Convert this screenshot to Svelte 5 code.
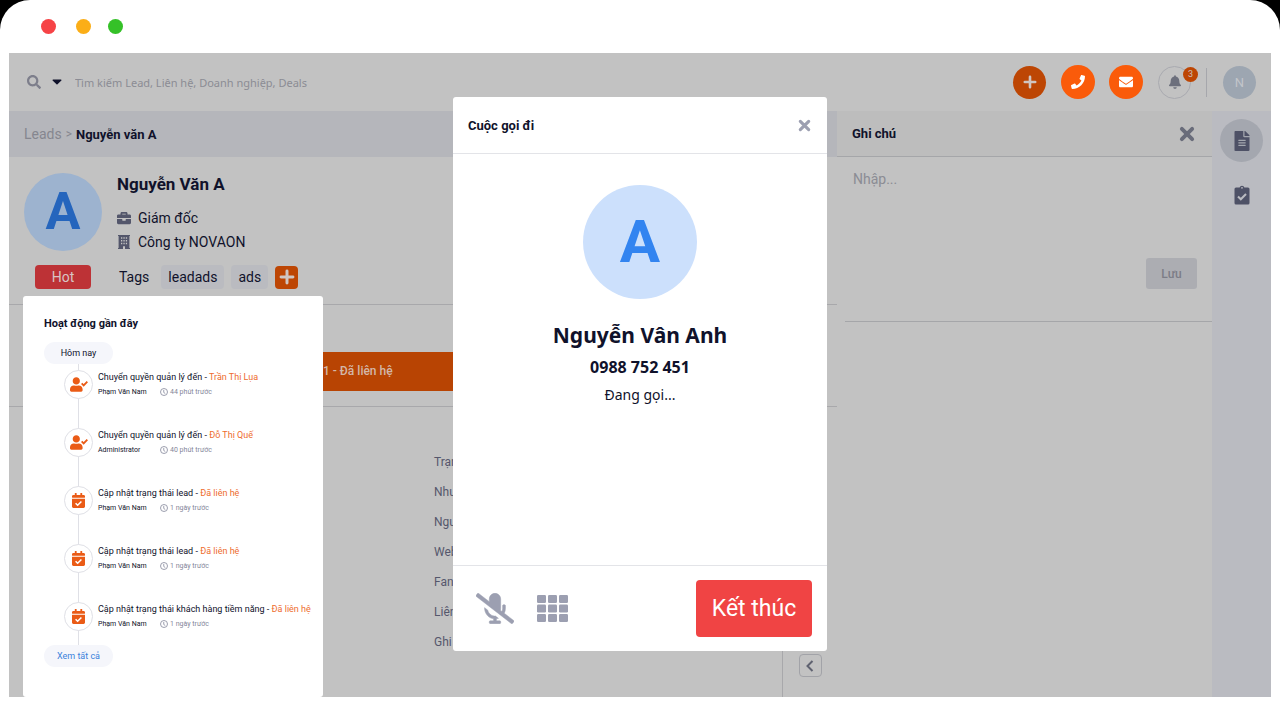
<script lang="ts">
  type Activity = {
    icon: 'user' | 'calendar';
    text: string;
    target: string;
    author: string;
    time: string;
  };

  const activities: Activity[] = [
    { icon: 'user', text: 'Chuyển quyền quản lý đến', target: 'Trần Thị Lụa', author: 'Phạm Văn Nam', time: '44 phút trước' },
    { icon: 'user', text: 'Chuyển quyền quản lý đến', target: 'Đỗ Thị Quế', author: 'Administrator', time: '40 phút trước' },
    { icon: 'calendar', text: 'Cập nhật trạng thái lead', target: 'Đã liên hệ', author: 'Phạm Văn Nam', time: '1 ngày trước' },
    { icon: 'calendar', text: 'Cập nhật trạng thái lead', target: 'Đã liên hệ', author: 'Phạm Văn Nam', time: '1 ngày trước' },
    { icon: 'calendar', text: 'Cập nhật trạng thái khách hàng tiềm năng', target: 'Đã liên hệ', author: 'Phạm Văn Nam', time: '1 ngày trước' },
  ];

  const fields = ['Trạng thái', 'Nhu cầu', 'Nguồn', 'Website', 'Fanpage', 'Liên hệ', 'Ghi chú'];
  const tags = ['leadads', 'ads'];

  let search = $state('');
  let note = $state('');
  let calling = $state(true);
</script>

{#snippet cross(size: number)}
  <svg width={size} height={size} viewBox="0 0 14 14" aria-hidden="true">
    <path d="M2.5 2.5l9 9M11.5 2.5l-9 9" fill="none" stroke="currentColor" stroke-width="3.4" stroke-linecap="round" />
  </svg>
{/snippet}

{#snippet plus(size: number)}
  <svg width={size} height={size} viewBox="0 0 14 14" aria-hidden="true">
    <path d="M7 1.8v10.4M1.8 7h10.4" fill="none" stroke="currentColor" stroke-width="2.6" stroke-linecap="round" />
  </svg>
{/snippet}

<div class="window">
  <div class="title-bar">
    <span class="dot red"></span>
    <span class="dot yellow"></span>
    <span class="dot green"></span>
  </div>

  <div class="app">
    <header class="topbar">
      <svg class="search-icon" width="14" height="14" viewBox="0 0 512 512" aria-hidden="true">
        <path fill="currentColor" d="M505 442.7L405.3 343c-4.5-4.5-10.6-7-17-7H372c27.6-35.3 44-79.7 44-128C416 93.1 322.9 0 208 0S0 93.1 0 208s93.1 208 208 208c48.3 0 92.7-16.4 128-44v16.3c0 6.4 2.5 12.5 7 17l99.7 99.7c9.4 9.4 24.6 9.4 33.9 0l28.3-28.3c9.4-9.4 9.4-24.6.1-34zM208 336c-70.7 0-128-57.2-128-128 0-70.7 57.2-128 128-128 70.7 0 128 57.2 128 128 0 70.7-57.2 128-128 128z" />
      </svg>
      <button class="caret" aria-label="Bộ lọc">
        <svg width="10" height="6" viewBox="0 0 10 6" aria-hidden="true">
          <path fill="currentColor" d="M1 .5h8a.6.6 0 0 1 .4 1L5.5 5.3a.7.7 0 0 1-1 0L.6 1.5a.6.6 0 0 1 .4-1z" />
        </svg>
      </button>
      <input
        class="search"
        type="text"
        aria-label="Tìm kiếm"
        placeholder="Tìm kiếm Lead, Liên hệ, Doanh nghiệp, Deals"
        bind:value={search}
      />
      <div class="actions">
        <button class="round dim" aria-label="Thêm">{@render plus(14)}</button>
        <button class="round" aria-label="Gọi điện" onclick={() => (calling = true)}>
          <svg width="14" height="14" viewBox="0 0 512 512" aria-hidden="true">
            <path fill="currentColor" d="M493.4 24.6l-104-24c-11.3-2.6-22.9 3.3-27.5 13.9l-48 112c-4.2 9.8-1.4 21.3 6.9 28l60.6 49.6c-36 76.7-98.9 140.5-177.2 177.2l-49.6-60.6c-6.8-8.3-18.2-11.1-28-6.9l-112 48C3.9 366.5-2 378.1.6 389.4l24 104C27.1 504.2 36.7 512 48 512c256.1 0 464-207.5 464-464 0-11.2-7.7-20.9-18.6-23.4z" />
          </svg>
        </button>
        <button class="round" aria-label="Gửi email">
          <svg width="14" height="14" viewBox="0 0 512 512" aria-hidden="true">
            <path fill="currentColor" d="M502.3 190.8c3.9-3.1 9.7-.2 9.7 4.7V400c0 26.5-21.5 48-48 48H48c-26.5 0-48-21.5-48-48V195.6c0-5 5.7-7.8 9.7-4.7 22.4 17.4 52.1 39.5 154.1 113.6 21.1 15.4 56.7 47.8 92.2 47.6 35.7.3 72-32.8 92.3-47.6 102-74.1 131.6-96.3 154-113.7zM256 320c23.2.4 56.6-29.2 73.4-41.4 132.7-96.3 142.8-104.7 173.4-128.7 5.8-4.5 9.2-11.5 9.2-18.9v-19c0-26.5-21.5-48-48-48H48c-26.5 0-48 21.5-48 48v19c0 7.4 3.4 14.3 9.2 18.9 30.6 23.9 40.7 32.4 173.4 128.7 16.8 12.2 50.2 41.8 73.4 41.4z" />
          </svg>
        </button>
        <button class="bell" aria-label="Thông báo">
          <svg width="12" height="14" viewBox="0 0 448 512" aria-hidden="true">
            <path fill="currentColor" d="M224 512c35.32 0 63.97-28.65 63.97-64H160.03c0 35.35 28.65 64 63.97 64zm215.39-149.71c-19.32-20.76-55.47-51.99-55.47-154.29 0-77.7-54.48-139.9-127.94-155.16V32c0-17.67-14.32-32-31.98-32s-31.98 14.33-31.98 32v20.84C118.56 68.1 64.08 130.3 64.08 208c0 102.3-36.15 133.53-55.47 154.29-6 6.45-8.66 14.16-8.61 21.71.11 16.4 12.98 32 32.1 32h383.8c19.12 0 32-15.6 32.1-32 .05-7.55-2.61-15.27-8.61-21.71z" />
          </svg>
          <span class="badge">3</span>
        </button>
        <span class="divider"></span>
        <button class="user">N</button>
      </div>
    </header>

    <div class="content">
      <main>
        <nav class="breadcrumb">
          <a href="#leads">Leads</a> <span>&gt;</span> <strong>Nguyễn văn A</strong>
        </nav>

        <section class="lead">
          <div class="lead-info">
            <div class="avatar">A</div>
            <div class="lead-text">
              <h1>Nguyễn Văn A</h1>
              <p>
                <svg width="14" height="14" viewBox="0 0 512 512" aria-hidden="true">
                  <path fill="currentColor" d="M320 336c0 8.84-7.16 16-16 16h-96c-8.84 0-16-7.16-16-16v-48H0v144c0 25.6 22.4 48 48 48h416c25.6 0 48-22.4 48-48V288H320v48zm144-208h-80V80c0-25.6-22.4-48-48-48H176c-25.6 0-48 22.4-48 48v48H48c-25.6 0-48 22.4-48 48v80h512v-80c0-25.6-22.4-48-48-48zm-144 0H192V96h128v32z" />
                </svg>
                Giám đốc
              </p>
              <p>
                <svg width="14" height="14" viewBox="0 0 14 14" aria-hidden="true">
                  <path fill="currentColor" fill-rule="evenodd" d="M1 0h12v1h-.6v12H13v1H8v-2.8H6V14H1v-1h.6V1H1zM4 2.2v1.5h1.3V2.2zm2.400 0v1.500h1.300V2.200zm2.400 0v1.500h1.300V2.200zM4 5v1.500h1.300V5zm2.400 0v1.500h1.300V5zm2.400 0v1.500h1.300V5zM4 7.800v1.500h1.300V7.800zm2.400 0v1.500h1.300V7.800zm2.400 0v1.500h1.300V7.800z" />
                </svg>
                Công ty NOVAON
              </p>
            </div>
          </div>
          <div class="tags">
            <span class="hot">Hot</span>
            <span class="tags-label">Tags</span>
            {#each tags as tag}
              <span class="tag">{tag}</span>
            {/each}
            <button class="add-tag" aria-label="Thêm tag">{@render plus(16)}</button>
          </div>
        </section>

        <section class="stages">
          <div class="stage">1 - Đã liên hệ</div>
        </section>

        <section class="details">
          <ul>
            {#each fields as field}
              <li>{field}</li>
            {/each}
          </ul>
          <div class="collapse-column">
            <button class="collapse" aria-label="Thu gọn">
              <svg width="8" height="12" viewBox="0 0 8 12" aria-hidden="true">
                <path d="M6.5 1L1.5 6l5 5" fill="none" stroke="currentColor" stroke-width="2" />
              </svg>
            </button>
          </div>
        </section>
      </main>

      <aside class="notes">
        <div class="notes-head">
          <h2>Ghi chú</h2>
          <button class="plain" aria-label="Đóng ghi chú">{@render cross(16)}</button>
        </div>
        <div class="notes-form">
          <textarea aria-label="Ghi chú" placeholder="Nhập..." bind:value={note}></textarea>
          <button class="save">Lưu</button>
        </div>
      </aside>

      <div class="rail">
        <button class="active" aria-label="Ghi chú">
          <svg width="16" height="20" viewBox="0 0 384 512" aria-hidden="true">
            <path fill="currentColor" d="M224 136V0H24C10.7 0 0 10.7 0 24v464c0 13.3 10.7 24 24 24h336c13.3 0 24-10.7 24-24V160H248c-13.2 0-24-10.8-24-24zm64 236c0 6.6-5.4 12-12 12H108c-6.6 0-12-5.4-12-12v-8c0-6.6 5.4-12 12-12h168c6.6 0 12 5.4 12 12v8zm0-64c0 6.6-5.4 12-12 12H108c-6.6 0-12-5.4-12-12v-8c0-6.6 5.4-12 12-12h168c6.6 0 12 5.4 12 12v8zm0-72v8c0 6.6-5.4 12-12 12H108c-6.6 0-12-5.4-12-12v-8c0-6.6 5.4-12 12-12h168c6.6 0 12 5.4 12 12zm96-114.1v6.1H256V0h6.1c6.4 0 12.5 2.5 17 7l97.9 98c4.5 4.5 7 10.6 7 16.9z" />
          </svg>
        </button>
        <button aria-label="Công việc">
          <svg width="16" height="20" viewBox="0 0 16 20" aria-hidden="true">
            <path fill="currentColor" fill-rule="evenodd" d="M2 2.5h3.600a2.500 2.500 0 0 1 4.800 0H14a1.500 1.500 0 0 1 1.500 1.500v14a1.500 1.500 0 0 1-1.500 1.500H2A1.500 1.500 0 0 1 .5 18V4A1.500 1.500 0 0 1 2 2.500zM8 1.900a.9.900 0 1 0 0 1.800.9.900 0 0 0 0-1.800z" />
            <path d="M4 11.500l2.800 2.800L12 9" fill="none" stroke="#babbc1" stroke-width="2" />
          </svg>
        </button>
      </div>
    </div>

    <section class="activity">
      <h2>Hoạt động gần đây</h2>
      <span class="pill">Hôm nay</span>
      <ol>
        {#each activities as item}
          <li>
            <span class="marker">
              {#if item.icon === 'user'}
                <svg width="18" height="15" viewBox="0 0 640 512" aria-hidden="true">
                  <path fill="currentColor" d="M224 256c70.7 0 128-57.3 128-128S294.7 0 224 0 96 57.3 96 128s57.3 128 128 128zm89.6 32h-16.7c-22.2 10.2-46.9 16-72.9 16s-50.6-5.8-72.9-16h-16.7C60.2 288 0 348.2 0 422.4V464c0 26.5 21.5 48 48 48h352c26.5 0 48-21.5 48-48v-41.6c0-74.2-60.2-134.4-134.4-134.4z" />
                  <path d="M415 215l71 71 130-130" fill="none" stroke="currentColor" stroke-width="66" />
                </svg>
              {:else}
                <svg width="13" height="15" viewBox="0 0 448 512" aria-hidden="true">
                  <path fill="currentColor" d="M436 160H12c-6.6 0-12-5.4-12-12v-36c0-26.5 21.5-48 48-48h48V12c0-6.6 5.4-12 12-12h40c6.6 0 12 5.4 12 12v52h128V12c0-6.6 5.4-12 12-12h40c6.6 0 12 5.4 12 12v52h48c26.5 0 48 21.5 48 48v36c0 6.600-5.400 12-12 12zM12 192h424c6.600 0 12 5.400 12 12v260c0 26.500-21.500 48-48 48H48c-26.500 0-48-21.500-48-48V204c0-6.600 5.400-12 12-12z" />
                  <path d="M124 350l70 70 130-130" fill="none" stroke="#fff" stroke-width="54" />
                </svg>
              {/if}
            </span>
            <div class="entry">
              <div class="entry-title">{item.text} - <a href="#activity">{item.target}</a></div>
              <div class="entry-meta">
                <span class="author">{item.author}</span>
                <svg width="8" height="8" viewBox="0 0 16 16" aria-hidden="true">
                  <path d="M8 1a7 7 0 1 0 0 14A7 7 0 0 0 8 1zM7.5 4v5l3 2" fill="none" stroke="currentColor" stroke-width="1.6" />
                </svg>
                <time>{item.time}</time>
              </div>
            </div>
          </li>
        {/each}
      </ol>
      <a class="pill" href="#all">Xem tất cả</a>
    </section>

    {#if calling}
      <div class="call" role="dialog" aria-labelledby="call-title">
        <div class="call-head">
          <h2 id="call-title">Cuộc gọi đi</h2>
          <button class="plain" aria-label="Đóng" onclick={() => (calling = false)}>{@render cross(13)}</button>
        </div>
        <div class="call-body">
          <div class="avatar large">A</div>
          <h3>Nguyễn Vân Anh</h3>
          <strong>0988 752 451</strong>
          <p>Đang gọi...</p>
        </div>
        <div class="call-foot">
          <button class="plain" aria-label="Tắt tiếng">
            <svg width="38" height="31" viewBox="0 0 640 512" aria-hidden="true">
              <path fill="currentColor" stroke="currentColor" stroke-width="8" d="M633.82 458.1l-157.8-121.96C488.61 312.13 496 285.01 496 256v-48c0-8.84-7.16-16-16-16h-16c-8.84 0-16 7.16-16 16v48c0 17.92-3.96 34.8-10.72 50.2l-26.55-20.52c3.1-9.4 5.28-19.22 5.28-29.67V96c0-53.02-42.98-96-96-96s-96 42.98-96 96v45.36L45.47 3.37C38.49-2.05 28.43-.8 23.01 6.18L3.37 31.45C-2.05 38.42-.8 48.47 6.18 53.9l588.36 454.73c6.98 5.43 17.03 4.17 22.46-2.81l19.64-25.27c5.41-6.97 4.16-17.02-2.82-22.45zM400 464h-56v-33.77c11.66-1.6 22.85-4.54 33.67-8.31l-50.11-38.73c-6.71.4-13.41.87-20.35.2-55.85-5.45-98.74-48.63-111.18-101.85L144 241.31v6.85c0 89.64 63.97 169.55 152 181.69V464h-56c-8.84 0-16 7.16-16 16v16c0 8.84 7.16 16 16 16h160c8.84 0 16-7.16 16-16v-16c0-8.84-7.16-16-16-16z" />
            </svg>
          </button>
          <button class="plain" aria-label="Bàn phím">
            <svg width="31" height="27" viewBox="0 0 31 27" aria-hidden="true">
              {#each [0, 9.5, 19] as y}
                {#each [0, 11, 22] as x}
                  <rect {x} {y} width="9" height="8" rx="1.2" fill="currentColor" />
                {/each}
              {/each}
            </svg>
          </button>
          <button class="hangup" onclick={() => (calling = false)}>Kết thúc</button>
        </div>
      </div>
    {/if}
  </div>
</div>

<style>
  :global(body) {
    background: #000;
  }

  .window {
    box-sizing: border-box;
    min-height: 100vh;
    padding: 0 9px 9px;
    display: flex;
    flex-direction: column;
    background: #fff;
    border-radius: 30px 30px 0 0;
    font-family: Roboto, 'Liberation Sans', sans-serif;
    color: #10122b;
  }

  button {
    padding: 0;
    border: 0;
    background: none;
    font: inherit;
    color: inherit;
    cursor: pointer;
    display: flex;
    align-items: center;
    justify-content: center;
  }

  h1,
  h2,
  h3,
  p,
  ul,
  ol {
    margin: 0;
    padding: 0;
    list-style: none;
  }

  svg {
    display: block;
    flex: none;
  }

  .title-bar {
    height: 53px;
    padding-left: 32px;
    display: flex;
    align-items: center;
  }

  .dot {
    width: 15px;
    height: 15px;
    margin-right: 20px;
    border-radius: 50%;
  }

  .red {
    background: #f64346;
  }

  .yellow {
    margin-right: 17px;
    background: #fbae17;
  }

  .green {
    background: #35c128;
  }

  .app {
    position: relative;
    flex: 1;
    display: flex;
    flex-direction: column;
    background: #c2c2c2;
  }

  .topbar {
    height: 58px;
    padding: 0 15px 0 18px;
    display: flex;
    align-items: center;
  }

  .search-icon {
    color: #7d7e8b;
  }

  .caret {
    margin: 0 13px 0 11px;
  }

  .search {
    flex: 1;
    min-width: 0;
    padding: 0;
    border: 0;
    outline: 0;
    background: none;
    font-family: 'Noto Sans', sans-serif;
    font-size: 11px;
  }

  .search::placeholder,
  textarea::placeholder {
    color: #8b8c94;
    opacity: 1;
  }

  .actions {
    display: flex;
    align-items: center;
  }

  .round {
    width: 34px;
    height: 34px;
    margin-right: 14px;
    border-radius: 50%;
    background: #fa5b0a;
    color: #fff;
  }

  .round.dim {
    width: 33px;
    height: 33px;
    margin-right: 15px;
    background: #bd4604;
    color: #d0c6c2;
  }

  .bell {
    position: relative;
    box-sizing: border-box;
    width: 33px;
    height: 33px;
    margin-left: 1px;
    border: 1px solid #a9aab0;
    border-radius: 50%;
    color: #6c6f7c;
  }

  .badge {
    position: absolute;
    top: 0;
    right: -8px;
    width: 15px;
    height: 15px;
    border-radius: 50%;
    background: #bd4604;
    color: #c9c0bc;
    font-size: 9px;
    line-height: 15px;
  }

  .divider {
    width: 1px;
    height: 29px;
    margin: 0 16px 0 15px;
    background: #a6a7ac;
  }

  .user {
    width: 33px;
    height: 33px;
    border-radius: 50%;
    background: #9da6b1;
    color: #c2c5ca;
    font-size: 13px;
  }

  .content {
    flex: 1;
    display: flex;
  }

  main {
    flex: 1;
    min-width: 0;
    display: flex;
    flex-direction: column;
  }

  .breadcrumb {
    height: 46px;
    padding-left: 15px;
    display: flex;
    align-items: center;
    gap: 4px;
    background: #b5b6bb;
    color: #85868f;
    font-size: 14px;
  }

  .breadcrumb a {
    color: inherit;
    text-decoration: none;
  }

  .breadcrumb span {
    font-size: 12px;
  }

  .breadcrumb strong {
    color: #10122b;
    font-size: 13px;
  }

  .lead {
    padding: 16px 15px 15px;
    border-bottom: 1px solid #a8a8ab;
  }

  .lead-info {
    display: flex;
    gap: 15px;
  }

  .avatar {
    width: 78px;
    height: 78px;
    border-radius: 50%;
    background: #9db3cf;
    color: #2565bd;
    font-size: 52px;
    font-weight: 700;
    line-height: 78px;
    text-align: center;
  }

  .lead-text h1 {
    margin-bottom: 11px;
    font-size: 17px;
    font-weight: 700;
    line-height: 22px;
  }

  .lead-text p {
    display: flex;
    align-items: center;
    gap: 7px;
    font-size: 14px;
    line-height: 24px;
  }

  .lead-text svg {
    color: #53566b;
  }

  .tags {
    display: flex;
    align-items: center;
    padding: 11px 0 0 11px;
    font-size: 14px;
    line-height: 24px;
  }

  .hot {
    width: 56px;
    border-radius: 4px;
    background: #bd3236;
    color: #d8c4c5;
    text-align: center;
  }

  .tags-label {
    margin: 0 12px 0 28px;
  }

  .tag {
    margin-right: 7px;
    padding: 0 7px;
    border-radius: 4px;
    background: #babbc0;
  }

  .add-tag {
    width: 23px;
    height: 23px;
    border-radius: 4px;
    background: #bd4604;
    color: #d0c6c2;
  }

  .stages {
    padding: 47px 15px 15px;
    border-bottom: 1px solid #a8a8ab;
  }

  .stage {
    padding-left: 299px;
    background: #b84403;
    color: #d3b7a8;
    font-size: 12px;
    font-weight: 500;
    line-height: 39px;
  }

  .details {
    flex: 1;
    display: flex;
    justify-content: space-between;
  }

  .details ul {
    padding: 40px 0 0 425px;
    color: #55576c;
    font-size: 12px;
    line-height: 30px;
  }

  .collapse-column {
    width: 54px;
    border-left: 1px solid #a8a8ab;
    display: flex;
    align-items: flex-end;
    justify-content: center;
  }

  .collapse {
    box-sizing: border-box;
    width: 23px;
    height: 23px;
    margin-bottom: 20px;
    border: 1px solid #a2a3a8;
    border-radius: 4px;
    color: #5f6270;
  }

  .notes {
    width: 375px;
  }

  .notes-head {
    height: 45px;
    padding: 0 17px 0 15px;
    display: flex;
    align-items: center;
    justify-content: space-between;
    border-bottom: 1px solid #a5a6a9;
    background: #bdbdbd;
  }

  h2 {
    font-size: 13px;
    font-weight: 700;
  }

  .plain {
    color: #9c9fb1;
  }

  .notes .plain {
    color: #696c7a;
  }

  .notes-form {
    margin-left: 8px;
    padding: 13px 15px 32px 8px;
    display: flex;
    flex-direction: column;
    align-items: flex-end;
    border-bottom: 1px solid #a5a6a9;
  }

  textarea {
    box-sizing: border-box;
    width: 100%;
    height: 88px;
    padding: 0;
    border: 0;
    outline: 0;
    resize: none;
    background: none;
    font: 14px/18px Roboto, sans-serif;
  }

  .save {
    width: 51px;
    height: 31px;
    border-radius: 3px;
    background: #acadb2;
    color: #7c7d87;
    font-size: 12px;
    font-weight: 500;
  }

  .rail {
    width: 59px;
    padding-top: 8px;
    display: flex;
    flex-direction: column;
    align-items: center;
    gap: 11px;
    background: #babbc1;
    color: #4e5166;
  }

  .rail button {
    width: 43px;
    height: 43px;
    border-radius: 50%;
  }

  .rail .active {
    background: #a4a7af;
  }

  .activity {
    position: absolute;
    box-sizing: border-box;
    left: 14px;
    bottom: 0;
    width: 300px;
    height: 401px;
    padding: 20px 21px;
    border-radius: 3px;
    background: #fff;
  }

  .activity h2 {
    margin-bottom: 10px;
    font-size: 11px;
    line-height: 16px;
  }

  .pill {
    display: block;
    width: 69px;
    border-radius: 12px;
    background: #f5f6fb;
    font-size: 9px;
    line-height: 22px;
    text-align: center;
    text-decoration: none;
  }

  a.pill {
    color: #3b82dc;
  }

  .activity li {
    position: relative;
    height: 52px;
    padding: 6px 0 0 20px;
    display: flex;
    align-items: flex-start;
    gap: 5px;
  }

  .activity li:last-child {
    height: 43px;
  }

  /* timeline running behind the round markers */
  .activity li::before {
    content: '';
    position: absolute;
    top: 0;
    bottom: 0;
    left: 34px;
    width: 1px;
    background: #dfe0e6;
  }

  .marker {
    position: relative;
    box-sizing: border-box;
    width: 29px;
    height: 29px;
    flex: none;
    display: flex;
    align-items: center;
    justify-content: center;
    border: 1px solid #dfe0e6;
    border-radius: 50%;
    background: #fff;
    color: #ea5b16;
  }

  .entry {
    white-space: nowrap;
  }

  .entry-title {
    font-size: 9px;
    line-height: 14px;
  }

  .entry-title a {
    color: #ee6c2e;
    text-decoration: none;
  }

  .entry-meta {
    display: flex;
    align-items: center;
    gap: 2px;
    color: #84869a;
    font-size: 7px;
    line-height: 16px;
  }

  .author {
    width: 60px;
    color: #10122b;
  }

  .call {
    position: absolute;
    top: 44px;
    left: 50%;
    width: 374px;
    transform: translateX(-50%);
    border-radius: 3px;
    background: #fff;
  }

  .call-head {
    height: 56px;
    padding: 0 16px 0 15px;
    display: flex;
    align-items: center;
    justify-content: space-between;
    border-bottom: 1px solid #e3e4e8;
  }

  .call-body {
    box-sizing: border-box;
    min-height: 411px;
    padding-top: 31px;
    display: flex;
    flex-direction: column;
    align-items: center;
    font-family: 'Noto Sans', sans-serif;
  }

  .avatar.large {
    width: 114px;
    height: 114px;
    background: #cce0fc;
    color: #3284f0;
    font-family: Roboto, sans-serif;
    font-size: 60px;
    line-height: 114px;
  }

  .call-body h3 {
    margin-top: 20px;
    font-size: 21px;
    font-weight: 700;
    line-height: 32px;
  }

  .call-body strong {
    font-size: 16px;
    line-height: 32px;
  }

  .call-body p {
    font-size: 14px;
    line-height: 24px;
  }

  .call-foot {
    height: 85px;
    padding: 0 15px 0 23px;
    display: flex;
    align-items: center;
    gap: 23px;
    border-top: 1px solid #e3e4e8;
  }

  .hangup {
    width: 116px;
    height: 57px;
    margin-left: auto;
    border-radius: 4px;
    background: #f04444;
    color: #fff;
    font-size: 23px;
  }
</style>
